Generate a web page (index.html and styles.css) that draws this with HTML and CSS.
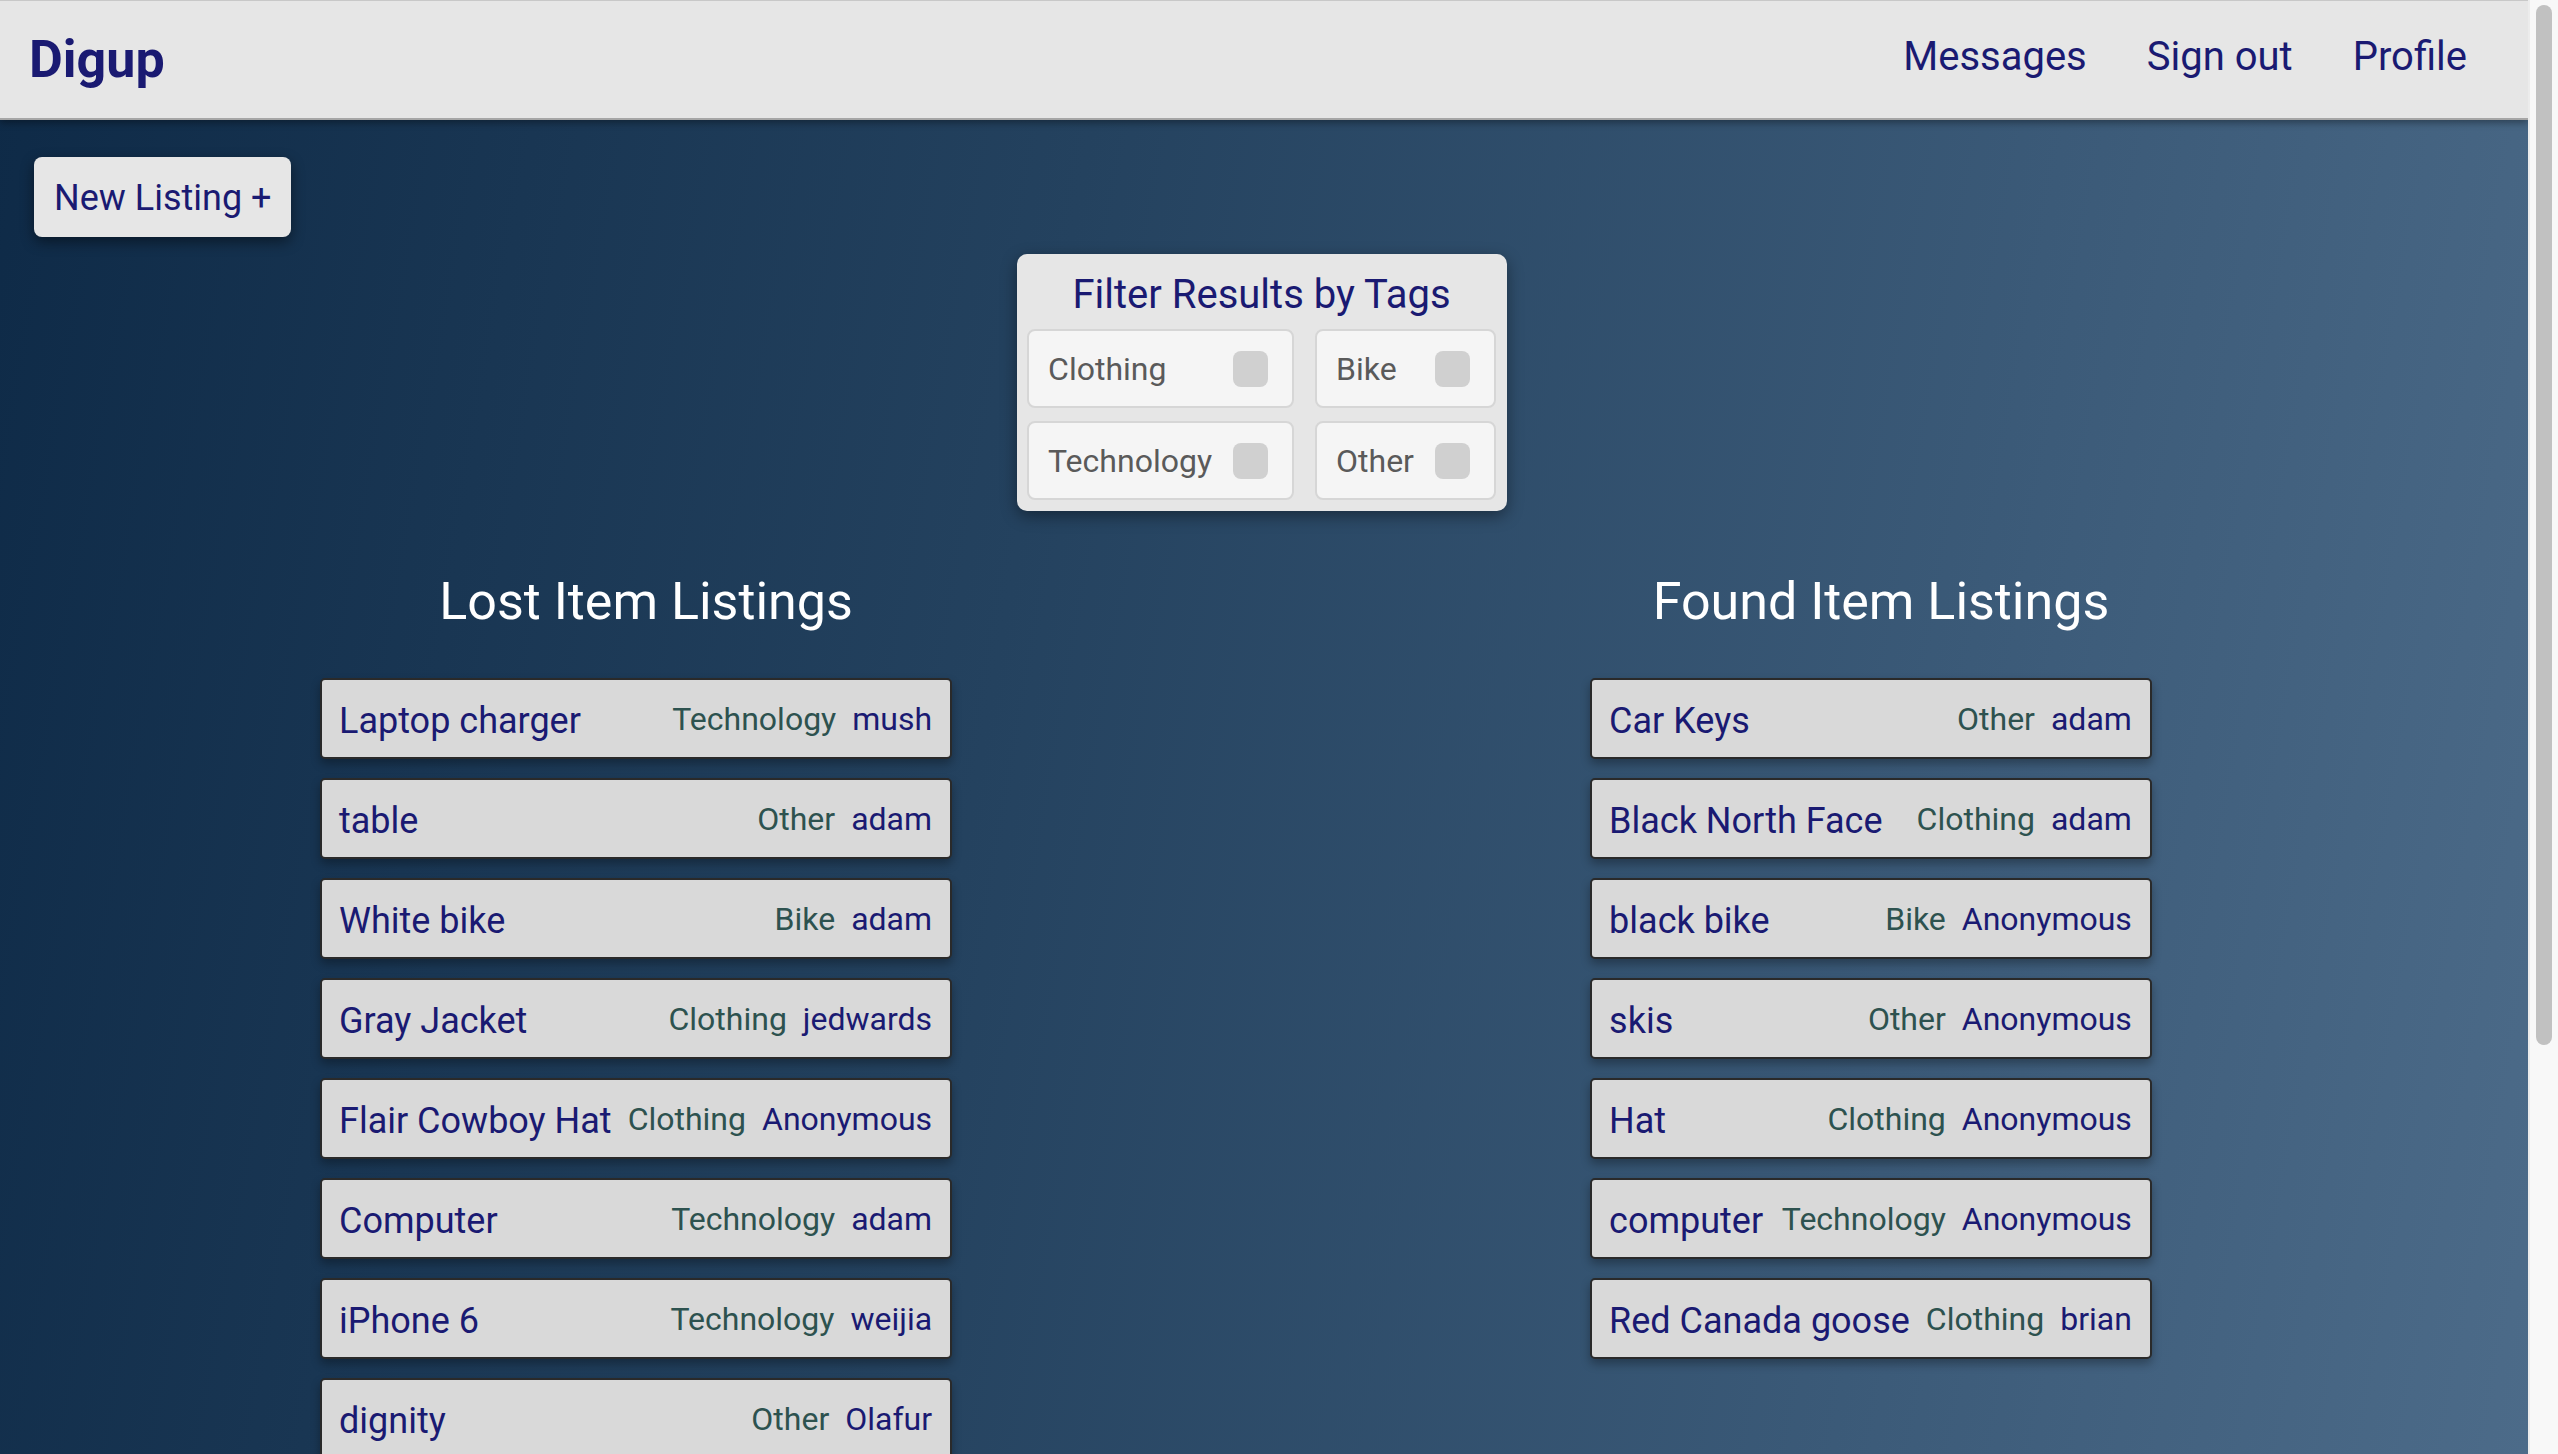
FILE: index.html
```html
<!DOCTYPE html>
<html lang="en">
<head>
<meta charset="utf-8">
<title>Digup</title>
<link rel="stylesheet" href="styles.css">
</head>
<body>
<div class="viewport">
  <div class="page">
    <header class="topbar">
      <div class="brand">Digup</div>
      <nav class="nav">
        <a class="nav-link">Messages</a>
        <a class="nav-link">Sign out</a>
        <a class="nav-link">Profile</a>
      </nav>
    </header>
    <main class="content">
      <div class="actions">
        <button class="new-btn">New Listing +</button>
      </div>
      <section class="filter">
        <div class="filter-title">Filter Results by Tags</div>
        <div class="filter-grid">
          <label class="tag"><span class="tag-label">Clothing</span><span class="check"></span></label>
          <label class="tag"><span class="tag-label">Bike</span><span class="check"></span></label>
          <label class="tag"><span class="tag-label">Technology</span><span class="check"></span></label>
          <label class="tag"><span class="tag-label">Other</span><span class="check"></span></label>
        </div>
      </section>
      <div class="columns">
        <section class="column">
          <h2 class="col-title">Lost Item Listings</h2>
          <ul class="list">
            <li class="row"><span class="name">Laptop charger</span><span class="meta"><span class="cat">Technology</span><span class="user">mush</span></span></li>
            <li class="row"><span class="name">table</span><span class="meta"><span class="cat">Other</span><span class="user">adam</span></span></li>
            <li class="row"><span class="name">White bike</span><span class="meta"><span class="cat">Bike</span><span class="user">adam</span></span></li>
            <li class="row"><span class="name">Gray Jacket</span><span class="meta"><span class="cat">Clothing</span><span class="user">jedwards</span></span></li>
            <li class="row"><span class="name">Flair Cowboy Hat</span><span class="meta"><span class="cat">Clothing</span><span class="user">Anonymous</span></span></li>
            <li class="row"><span class="name">Computer</span><span class="meta"><span class="cat">Technology</span><span class="user">adam</span></span></li>
            <li class="row"><span class="name">iPhone 6</span><span class="meta"><span class="cat">Technology</span><span class="user">weijia</span></span></li>
            <li class="row"><span class="name">dignity</span><span class="meta"><span class="cat">Other</span><span class="user">Olafur</span></span></li>
          </ul>
        </section>
        <section class="column">
          <h2 class="col-title">Found Item Listings</h2>
          <ul class="list">
            <li class="row"><span class="name">Car Keys</span><span class="meta"><span class="cat">Other</span><span class="user">adam</span></span></li>
            <li class="row"><span class="name">Black North Face</span><span class="meta"><span class="cat">Clothing</span><span class="user">adam</span></span></li>
            <li class="row"><span class="name">black bike</span><span class="meta"><span class="cat">Bike</span><span class="user">Anonymous</span></span></li>
            <li class="row"><span class="name">skis</span><span class="meta"><span class="cat">Other</span><span class="user">Anonymous</span></span></li>
            <li class="row"><span class="name">Hat</span><span class="meta"><span class="cat">Clothing</span><span class="user">Anonymous</span></span></li>
            <li class="row"><span class="name">computer</span><span class="meta"><span class="cat">Technology</span><span class="user">Anonymous</span></span></li>
            <li class="row"><span class="name">Red Canada goose</span><span class="meta"><span class="cat">Clothing</span><span class="user">brian</span></span></li>
          </ul>
        </section>
      </div>
    </main>
  </div>
  <div class="scrollbar"><div class="thumb"></div></div>
</div>
</body>
</html>
```
FILE: styles.css
```css
* { box-sizing: border-box; }
html, body { margin: 0; padding: 0; height: 100%; overflow: hidden; }
body {
  font-family: Roboto, "Liberation Sans", sans-serif;
  color: #1a1a72;
}
.viewport {
  display: flex;
  height: 100vh;
  width: 100vw;
}
.page {
  flex: 1;
  min-width: 0;
  overflow: hidden;
  background: linear-gradient(100deg, #0e2a47 0%, #24425f 40%, #3b5a78 75%, #4c6b89 100%);
}
.topbar {
  height: 120px;
  background: #e6e6e6;
  border-top: 1px solid #c8c8c8;
  border-bottom: 2px solid #a6a6a6;
  box-shadow: 0 3px 7px rgba(0, 0, 0, 0.35);
  display: flex;
  align-items: center;
  justify-content: space-between;
  padding: 0 31px 0 29px;
  position: relative;
  z-index: 2;
}
.brand {
  font-size: 52px;
  font-weight: 700;
  color: #1a1a72;
}
.nav {
  display: flex;
  padding-bottom: 7px;
}
.nav-link {
  font-size: 40px;
  color: #1a1a72;
  padding: 0 30px;
}
.content {
  padding-top: 37px;
}
.actions {
  padding-left: 34px;
}
.new-btn {
  font-family: Roboto, "Liberation Sans", sans-serif;
  font-size: 36px;
  color: #1a1a72;
  background: #e6e6e6;
  border: none;
  border-radius: 8px;
  padding: 20px 20px 18px;
  line-height: 42px;
  box-shadow: 0 5px 14px rgba(0, 0, 0, 0.45);
}
.filter {
  width: fit-content;
  margin: 17px auto 0;
  background: #e6e6e6;
  border-radius: 10px;
  padding: 0 11px 11px 10px;
  box-shadow: 0 5px 16px rgba(0, 0, 0, 0.4);
  position: relative;
  left: -2px;
}
.filter-title {
  font-size: 40px;
  line-height: 47px;
  text-align: center;
  padding-top: 17px;
  margin-bottom: 11px;
  color: #1a1a72;
}
.filter-grid {
  display: grid;
  grid-template-columns: auto auto;
  column-gap: 21px;
  row-gap: 13px;
}
.tag {
  height: 79px;
  display: flex;
  align-items: center;
  background: #f5f5f5;
  border: 2px solid #d6d6d6;
  border-radius: 8px;
  padding: 0 24px 0 19px;
}
.tag-label {
  flex: 1;
  font-size: 32px;
  color: #5a5a5a;
  margin-right: 21px;
}
.check {
  width: 35px;
  height: 36px;
  background: #d0d0d0;
  border-radius: 8px;
}
.columns {
  display: flex;
  align-items: flex-start;
  padding-left: 320px;
  gap: 618px;
  margin-top: 60px;
}
.column {
  display: flex;
  flex-direction: column;
}
.col-title {
  margin: 0 0 46px;
  font-size: 52px;
  line-height: 61px;
  font-weight: 400;
  color: #ffffff;
  text-align: center;
}
.list {
  list-style: none;
  margin: 0 20px 0 0;
  padding: 0;
}
.row {
  height: 81px;
  display: flex;
  align-items: center;
  justify-content: space-between;
  gap: 16px;
  background: #d9d9d9;
  border: 2px solid #2a2a2a;
  border-radius: 5px;
  padding: 0 18px 0 17px;
  margin-bottom: 19px;
  box-shadow: 0 5px 10px rgba(0, 0, 0, 0.3);
  white-space: nowrap;
}
.name {
  font-size: 36px;
  color: #1a1a72;
  padding-top: 5px;
}
.meta {
  display: flex;
  gap: 16px;
  font-size: 32px;
  padding-top: 1px;
}
.cat { color: #2d524f; }
.user { color: #1a1a72; }
.scrollbar {
  width: 30px;
  flex: none;
  background: #f8f8f8;
  border-left: 2px solid #ececec;
  padding: 5px 6px 0;
}
.thumb {
  width: 16px;
  height: 1040px;
  background: #c1c1c1;
  border-radius: 8px;
}
```
